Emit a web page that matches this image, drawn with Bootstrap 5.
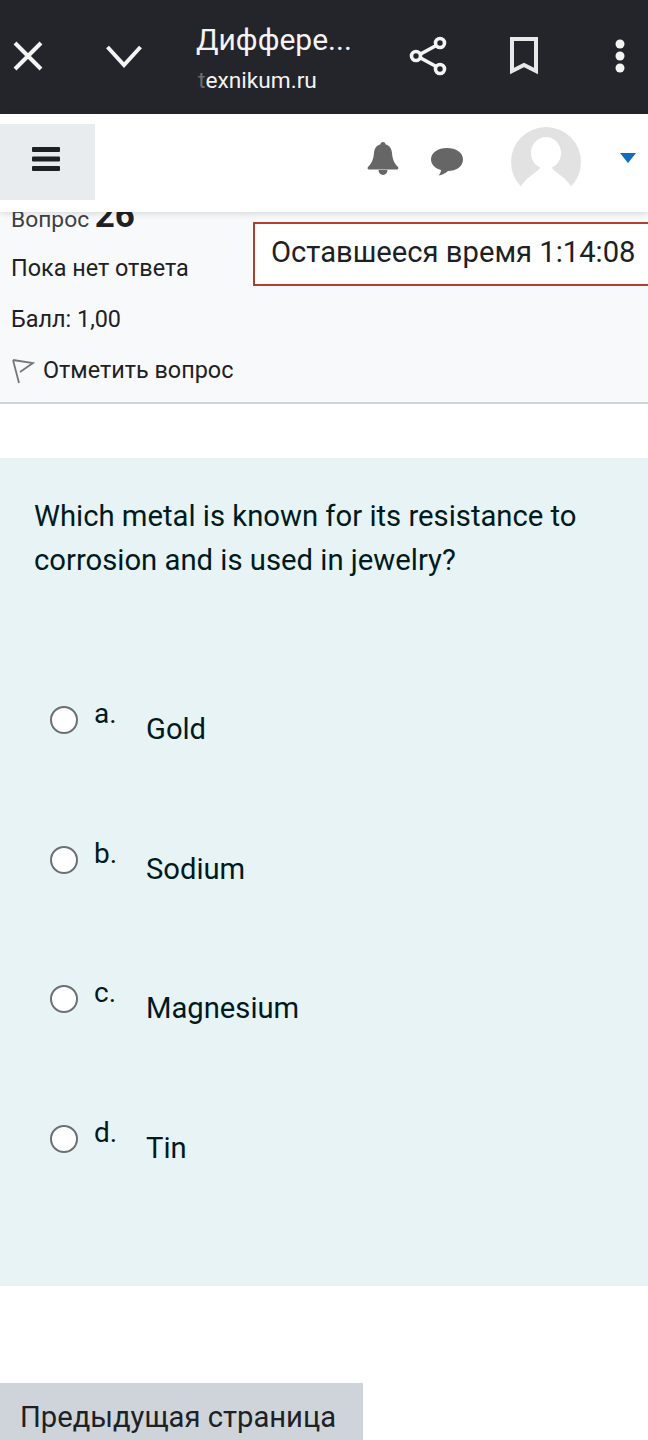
<!DOCTYPE html>
<html lang="ru">

<head>
    <meta charset="UTF-8">
    <meta name="viewport" content="width=device-width, initial-scale=1.0">
    <title>Тест | texnikum.ru</title>
    <link href="https://cdn.jsdelivr.net/npm/bootstrap@5.3.2/dist/css/bootstrap.min.css" rel="stylesheet">
    <style>
        html, body {
            height: 1440px;
            overflow: hidden;
        }
        body {
            font-family: Roboto, "Liberation Sans", sans-serif;
            background-color: #fff;
            color: #1d2125;
        }
        .app-bar {
            height: 114px;
            padding-bottom: 2px;
            background-color: #24252b;
            color: #f4f4f4;
        }
        .bar-btn {
            width: 96px;
            flex: none;
        }
        .bar-close {
            width: 56px;
        }
        .bar-down {
            width: 136px;
        }
        .bar-last {
            width: 76px;
            padding-left: 20px;
        }
        .bar-title {
            width: 188px;
            flex: none;
            padding: 6px 0 0 4px;
        }
        .bar-title-main {
            font-size: 30px;
            line-height: 40px;
            margin-top: -2px;
        }
        .bar-title-host {
            font-size: 22.700px;
            line-height: 30px;
            margin-top: 6px;
            padding-left: 2px;
        }
        .host-fade {
            color: #6b6c71;
        }
        .site-nav {
            height: 98px;
            background-color: #fff;
            box-shadow: 0 2px 6px rgba(0, 0, 0, .12);
            position: relative;
            z-index: 2;
        }
        .menu-box {
            width: 95px;
            height: 76px;
            margin-top: 10px;
            padding: 0 4px 6px 0;
            background-color: #e9ecef;
        }
        .nav-tools {
            padding-right: 12px;
        }
        .bell-icon {
            margin-top: 28px;
        }
        .bubble-icon {
            margin-top: 33px;
            margin-left: 31px;
        }
        .avatar-pic {
            width: 70px;
            height: 70px;
            margin-left: 47px;
            margin-right: 39px;
            margin-top: 13px;
        }
        .caret-icon {
            margin-top: 39px;
        }
        .info-panel {
            height: 212px;
            margin-top: -20px;
            padding: 0 11px;
            background-color: #f8f9fa;
            border-bottom: 2px solid #ced4da;
            font-size: 23.400px;
            position: relative;
        }
        .info-line {
            height: 51px;
            line-height: 49px;
        }
        .info-flag {
            height: 49px;
        }
        .info-first {
            height: 51px;
            line-height: 48px;
            margin-top: -4px;
            margin-bottom: 1px;
            font-size: 22.800px;
            color: #3c4146;
        }
        .q-num {
            font-size: 35px;
            font-weight: 700;
            color: #1d2125;
        }
        .timer-box {
            position: absolute;
            top: 30px;
            left: 253px;
            right: -4px;
            height: 64px;
            padding-left: 16px;
            line-height: 56px;
            font-size: 29.200px;
            background-color: #fff;
            border: 2px solid #b0402f;
        }
        .question-box {
            height: 828px;
            margin-top: 54px;
            padding: 36px 34px 0;
            background-color: #e7f3f5;
            color: #001a1e;
        }
        .question-text {
            font-size: 29.250px;
            line-height: 44px;
        }
        .answers {
            margin-top: 113px;
        }
        .answer-row {
            height: 139.500px;
            padding-left: 16px;
        }
        .answer-radio.form-check-input {
            width: 28px;
            height: 28px;
            margin: 11px 0 0;
            flex: none;
            background-color: #fff;
            border: 2px solid #6a7074;
        }
        .answer-letter {
            width: 52px;
            margin-left: 16px;
            margin-top: 2px;
            font-size: 28px;
            line-height: 34px;
            flex: none;
        }
        .answer-label {
            font-size: 29.200px;
            line-height: 36px;
            margin-top: 16px;
        }
        .prev-btn {
            display: block;
            width: 363px;
            height: 60px;
            margin-top: 97px;
            padding: 8px 0 0 20px;
            border: 0;
            border-radius: 0;
            background-color: #ced4da;
            color: #1d2125;
            font-size: 29.200px;
            line-height: 38px;
            text-align: left;
        }
    </style>
</head>

<body>
    <!-- In-app browser bar -->
    <div class="app-bar d-flex align-items-center">
        <div class="bar-btn bar-close d-flex justify-content-center">
            <svg width="30" height="30" viewBox="0 0 30 30" fill="none" stroke="#f4f4f4" stroke-width="4"><path d="M2 2l26 26M28 2L2 28"/></svg>
        </div>
        <div class="bar-btn bar-down d-flex justify-content-center">
            <svg width="36" height="24" viewBox="0 0 36 24" fill="none" stroke="#f4f4f4" stroke-width="4"><path d="M1.500 3L18 21 34.500 3"/></svg>
        </div>
        <div class="bar-title">
            <div class="bar-title-main">Диффере...</div>
            <div class="bar-title-host"><span class="host-fade">t</span>exnikum.ru</div>
        </div>
        <div class="bar-btn d-flex justify-content-center ms-auto">
            <svg width="38" height="40" viewBox="0 0 38 40" fill="none" stroke="#f4f4f4" stroke-width="3.600"><path d="M30 8L8 20l22 12"/><circle cx="31" cy="7" r="4.500" fill="#24252b"/><circle cx="7" cy="20" r="4.500" fill="#24252b"/><circle cx="31" cy="33" r="4.500" fill="#24252b"/></svg>
        </div>
        <div class="bar-btn d-flex justify-content-center">
            <svg width="30" height="38" viewBox="0 0 30 38" fill="none" stroke="#e8e8ea" stroke-width="4"><path d="M3 2h24v32L15 28 3 34z"/></svg>
        </div>
        <div class="bar-btn bar-last d-flex justify-content-center">
            <svg width="10" height="34" viewBox="0 0 10 34" fill="#f4f4f4"><circle cx="5" cy="5" r="4.500"/><circle cx="5" cy="17" r="4.500"/><circle cx="5" cy="29" r="4.500"/></svg>
        </div>
    </div>

    <!-- Site navbar -->
    <nav class="site-nav d-flex">
        <div class="menu-box d-flex align-items-center justify-content-center">
            <svg width="28" height="26" viewBox="0 0 28 26" fill="#1d2125"><rect x="0" y="1" width="28" height="5" rx="1"/><rect x="0" y="10.500" width="28" height="5" rx="1"/><rect x="0" y="20" width="28" height="5" rx="1"/></svg>
        </div>
        <div class="nav-tools d-flex ms-auto">
            <svg class="bell-icon" width="32" height="34" viewBox="0 0 32 34" fill="#666"><circle cx="16" cy="2.500" r="2.500"/><path d="M16 2c5.500 0 8.500 3.500 9 9 .5 6 2 10 6 14 .8 1 .3 2.500-1 2.500H2c-1.300 0-1.800-1.500-1-2.500 4-4 5.500-8 6-14 .5-5.500 3.500-9 9-9z"/><path d="M11.500 28a4.500 5 0 0 0 9 0z"/></svg>
            <svg class="bubble-icon" width="34" height="30" viewBox="0 0 34 30" fill="#666"><path d="M17 1c9 0 16 4.500 16 11.500S26 24 18 24c-3 2.500-6 4-9.500 4.500 1.500-1.500 2.500-3.500 2.500-5.500C5 21.500 1 17.500 1 12.500 1 5.500 8 1 17 1z"/></svg>
            <svg class="avatar-pic" viewBox="0 0 70 70"><circle cx="35" cy="35" r="35" fill="#e2e2e2"/><ellipse cx="35" cy="26" rx="15" ry="16" fill="#fff"/><path d="M9 61c5-10 15-14 20-20h12c5 6 15 10 20 20v9H9z" fill="#fff"/></svg>
            <svg class="caret-icon" width="16" height="10" viewBox="0 0 16 10" fill="#0f6cbf"><path d="M0 0h16L8 10z"/></svg>
        </div>
    </nav>

    <!-- Question info block -->
    <div class="info-panel">
        <div class="info-first">Вопрос <span class="q-num">26</span></div>
        <div class="info-line">Пока нет ответа</div>
        <div class="info-line">Балл: 1,00</div>
        <div class="info-line info-flag d-flex align-items-center gap-2">
            <svg width="24" height="26" viewBox="0 0 24 26" fill="none" stroke="#777" stroke-width="1.800"><path d="M2 2l6 23M2 2l20 3-13 9"/></svg>
            <span>Отметить вопрос</span>
        </div>
        <div class="timer-box">Оставшееся время 1:14:08</div>
    </div>

    <!-- Question body -->
    <div class="question-box">
        <div class="question-text">Which metal is known for its resistance to corrosion and is used in jewelry?</div>
        <div class="answers">
            <div class="answer-row d-flex">
                <input class="form-check-input answer-radio" type="radio" name="answer">
                <div class="answer-letter">a.</div>
                <div class="answer-label">Gold</div>
            </div>
            <div class="answer-row d-flex">
                <input class="form-check-input answer-radio" type="radio" name="answer">
                <div class="answer-letter">b.</div>
                <div class="answer-label">Sodium</div>
            </div>
            <div class="answer-row d-flex">
                <input class="form-check-input answer-radio" type="radio" name="answer">
                <div class="answer-letter">c.</div>
                <div class="answer-label">Magnesium</div>
            </div>
            <div class="answer-row d-flex">
                <input class="form-check-input answer-radio" type="radio" name="answer">
                <div class="answer-letter">d.</div>
                <div class="answer-label">Tin</div>
            </div>
        </div>
    </div>

    <button type="button" class="btn prev-btn">Предыдущая страница</button>

    <script src="https://cdn.jsdelivr.net/npm/bootstrap@5.3.2/dist/js/bootstrap.bundle.min.js"></script>
</body>

</html>
